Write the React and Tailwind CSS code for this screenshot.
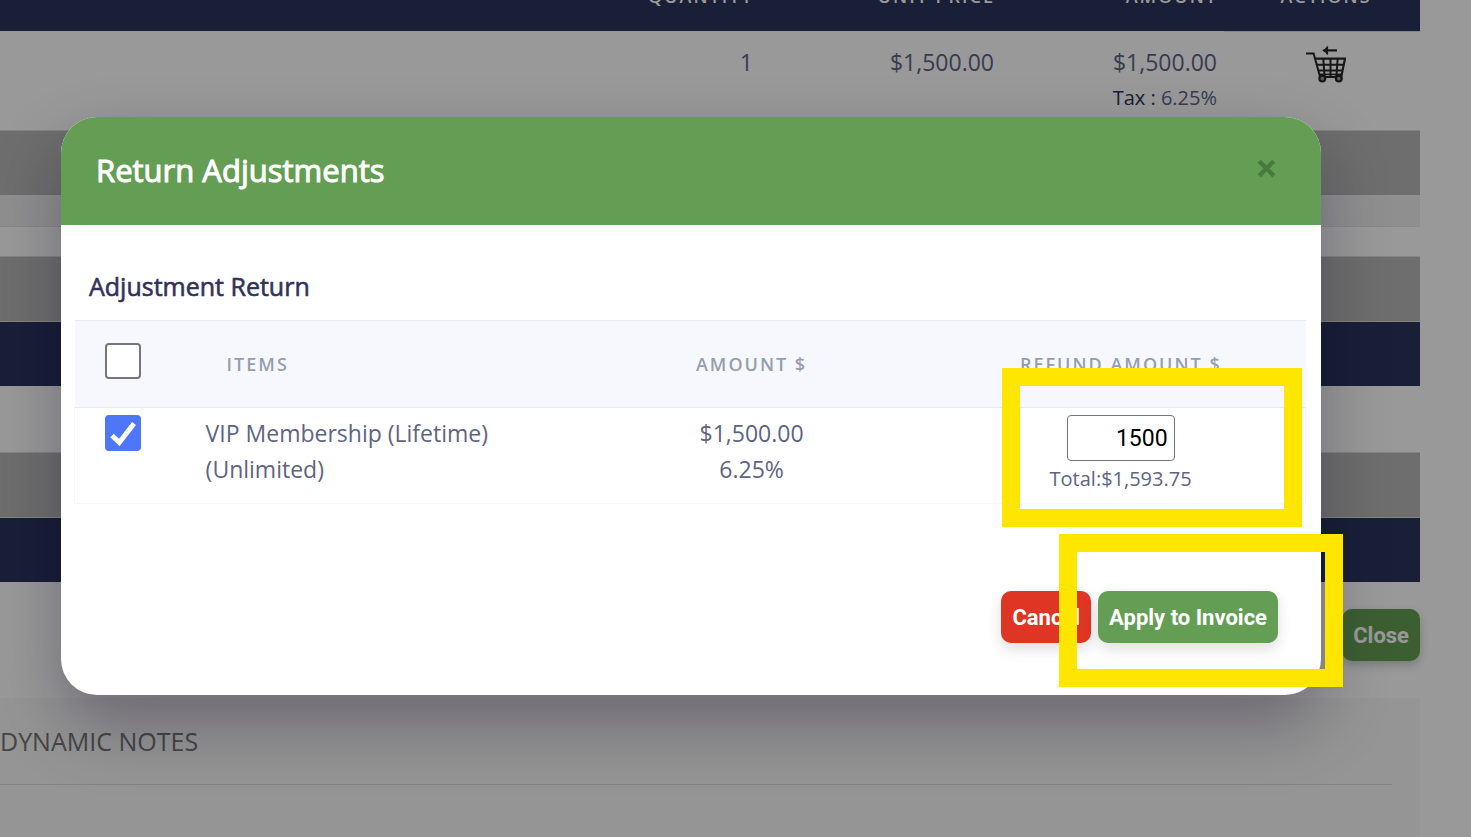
import React, { useState } from "react";

function CartReturnIcon() {
  return (
    <svg width="40" height="38" viewBox="0 0 40 38" fill="none" stroke="#262626" aria-hidden="true">
      <path d="M0 7.6H7.6L14.4 32" strokeWidth="2" />
      <path d="M9.5 12.6H39L35.2 31H14" strokeWidth="2.2" />
      <path d="M11 18.8H38M12.5 24.4H37" strokeWidth="2" />
      <path d="M17.3 13L18.6 31M24.5 13V31M31.6 13L30.4 31" strokeWidth="2" />
      <path d="M14 28.4H35.6" strokeWidth="1.6" />
      <circle cx="16.3" cy="32.6" r="2.9" fill="#999" strokeWidth="2.2" />
      <circle cx="32.8" cy="32.6" r="2.9" fill="#999" strokeWidth="2.2" />
      <path d="M18 4.4H31" strokeWidth="2.2" />
      <path d="M21.5 .6C20.6 2.6 19 3.9 16.8 4.4C19 5 20.6 6.4 21.5 8.4V.6Z" fill="#262626" strokeWidth="1.2" />
    </svg>
  );
}

function Tick({ checked, onChange, label }) {
  return (
    <label className="grid size-9 cursor-pointer">
      <input
        type="checkbox"
        aria-label={label}
        checked={checked}
        onChange={onChange}
        className="col-start-1 row-start-1 size-9 appearance-none rounded border-2 border-[#767676] bg-white checked:border-[#4d76f8] checked:bg-[#4d76f8]"
      />
      {checked && (
        <svg className="pointer-events-none col-start-1 row-start-1" width="36" height="36" viewBox="0 0 36 36" fill="none" aria-hidden="true">
          <path d="M7 20.5L14.3 27.5L29 8.5" stroke="#fff" strokeWidth="5" />
        </svg>
      )}
    </label>
  );
}

function InvoicePage() {
  return (
    <div className="mr-[51px]">
      <table className="-mt-[36px] w-full table-fixed text-right text-[23px] text-[#5e6484]">
        <colgroup>
          <col />
          <col className="w-[241px]" />
          <col className="w-[223px]" />
          <col className="w-[196px]" />
        </colgroup>
        <thead className="bg-[#28345c] text-[18px] leading-6 tracking-[2px] text-white uppercase">
          <tr className="h-[67px] align-top">
            <th className="px-[6px] pt-5 font-semibold">Quantity</th>
            <th className="px-[6px] pt-5 font-semibold">Unit Price</th>
            <th className="px-[6px] pt-5 font-semibold">Amount</th>
            <th className="pt-5 pl-2 text-center font-semibold">Actions</th>
          </tr>
        </thead>
        <tbody>
          <tr className="h-[99px] align-top leading-9">
            <td className="px-[7px] pt-[13px]">1</td>
            <td className="px-[7px] pt-[13px]">$1,500.00</td>
            <td className="px-[7px] pt-[13px]">
              <div>$1,500.00</div>
              <div className="text-[20px]">
                <span className="text-[#28345c]">Tax :</span> 6.25%
              </div>
            </td>
            <td className="border-t border-[#dcdce8] pt-[14px]">
              <div className="flex justify-center pl-2">
                <button type="button" aria-label="Return item">
                  <CartReturnIcon />
                </button>
              </div>
            </td>
          </tr>
        </tbody>
      </table>

      <div className="h-[65px] border-t border-[#dcdcdc] bg-[#b7b7b7]" />
      <div className="h-8 border-b border-[#e4e4e8] bg-[#efeff1]" />
      <div className="h-[29px]" />
      <div className="h-[65px] border-t border-[#dcdcdc] bg-[#b7b7b7]" />
      <div className="h-[65px] border-t border-[#dcdcdc] bg-[#28345c]" />
      <div className="h-[66px]" />
      <div className="h-[65px] border-t border-[#dcdcdc] bg-[#b7b7b7]" />
      <div className="h-[65px] border-t border-[#dcdcdc] bg-[#28345c]" />

      <div className="flex justify-end pt-[27px] pb-[37px]">
        <button type="button" className="h-[52px] rounded-[10px] bg-[#649e54] px-[11px] font-[Roboto,sans-serif] text-[22px] font-bold text-white shadow-[0_4px_10px_rgba(0,0,0,0.2)]">
          Close
        </button>
      </div>

      <section className="bg-[#f9f9f9] pr-7 pb-14">
        <h2 className="border-b border-[#dadada] pt-[25px] pb-[25px] text-[25px] leading-9 text-[#757575]">
          DYNAMIC NOTES
        </h2>
      </section>
    </div>
  );
}

function ReturnModal() {
  const [all, setAll] = useState(false);
  const [picked, setPicked] = useState(true);
  const [amount, setAmount] = useState("1500");

  return (
    <div role="dialog" aria-labelledby="modal-title" className="relative w-full rounded-[36px] bg-white shadow-[0_30px_68px_rgba(12,0,30,0.3)]">
      <header className="flex h-[108px] items-center justify-between rounded-t-[36px] bg-[#649e54] pr-[45px] pb-[2px] pl-[35px]">
        <h1 id="modal-title" className="text-[31px] text-white [-webkit-text-stroke:1px_#fff]">
          Return Adjustments
        </h1>
        <button type="button" aria-label="Close" className="mb-1">
          <svg width="19" height="19" viewBox="0 0 19 19" stroke="#487a3b" strokeWidth="4.4" aria-hidden="true">
            <path d="M2.2 2.2L16.8 16.8M16.8 2.2L2.2 16.8" />
          </svg>
        </button>
      </header>

      <div className="pt-[43px] pr-[15px] pl-[13px]">
        <h2 className="mb-4 px-[15px] text-[25px] leading-9 text-[#33325c] [-webkit-text-stroke:0.6px_#33325c]">
          Adjustment Return
        </h2>
        <table className="w-full table-fixed text-[23px] leading-9 text-[#5e6484]">
          <colgroup>
            <col className="w-[10%]" />
            <col className="w-[30%]" />
            <col className="w-[30%]" />
            <col className="w-[30%]" />
          </colgroup>
          <thead className="border-y border-[#e8eaee] bg-[#f7f8fd] text-[18px] tracking-[2px] text-[#949eb0] uppercase">
            <tr className="h-[87px]">
              <th className="pb-[7px] pl-[30px]">
                <Tick checked={all} onChange={() => setAll(!all)} label="Select all items" />
              </th>
              <th className="pl-[29px] text-left font-semibold">Items</th>
              <th className="font-semibold">Amount $</th>
              <th className="font-semibold">Refund Amount $</th>
            </tr>
          </thead>
          <tbody className="border border-t-0 border-[#f7f7f9]">
            <tr className="h-24 align-top">
              <td className="pt-[7px] pl-[30px]">
                <Tick checked={picked} onChange={() => setPicked(!picked)} label="VIP Membership" />
              </td>
              <td className="pt-[7px] pl-2">
                VIP Membership (Lifetime)
                <br />
                (Unlimited)
              </td>
              <td className="pt-[7px] text-center">
                $1,500.00
                <br />
                6.25%
              </td>
              <td className="pt-[7px]">
                <div className="flex flex-col items-center">
                  <input
                    type="text"
                    aria-label="Refund amount"
                    value={amount}
                    onChange={(e) => setAmount(e.target.value)}
                    className="h-[46px] w-[108px] rounded border border-[#767676] bg-white px-[6px] text-right font-[Roboto,sans-serif] text-[23px] text-black"
                  />
                  <div className="text-[20px]">Total:$1,593.75</div>
                </div>
              </td>
            </tr>
          </tbody>
        </table>
      </div>

      <footer className="flex justify-end gap-[7px] pt-[87px] pr-[43px] pb-[52px] font-[Roboto,sans-serif] text-[22px] font-bold text-white">
        <button type="button" className="h-[52px] rounded-[10px] bg-[#df3524] px-[11px] shadow-[0_6px_14px_rgba(40,40,60,0.15)]">
          Cancel
        </button>
        <button type="button" className="h-[52px] rounded-[10px] bg-[#649e54] px-[11px] shadow-[0_6px_14px_rgba(40,40,60,0.15)]">
          Apply to Invoice
        </button>
      </footer>

      <div className="pointer-events-none absolute top-[251px] right-[19px] h-[159px] w-[300px] border-[18px] border-[#ffe600]" />
      <div className="pointer-events-none absolute top-[417px] -right-[22px] h-[153px] w-[284px] border-[18px] border-[#ffe600]" />
    </div>
  );
}

export default function App() {
  return (
    <div className="relative h-screen overflow-hidden bg-white font-['Open_Sans',sans-serif]">
      <InvoicePage />
      <div className="absolute inset-0 flex items-start bg-black/40 pt-[117px] pr-[150px] pl-[61px]">
        <ReturnModal />
      </div>
    </div>
  );
}
